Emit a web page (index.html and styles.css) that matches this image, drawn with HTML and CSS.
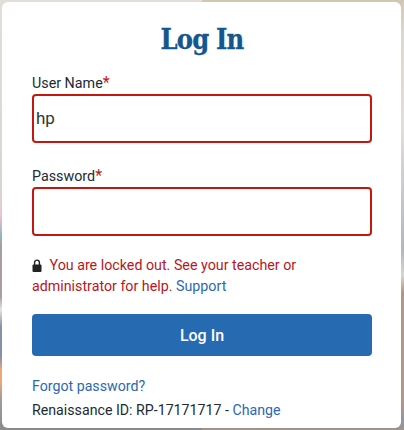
FILE: index.html
```html
<!DOCTYPE html>
<html lang="en">
<head>
<meta charset="utf-8">
<title>Log In</title>
<link rel="stylesheet" href="styles.css">
</head>
<body>
<main class="card">
  <h1 class="title">Log In</h1>
  <form class="form">
    <div class="field">
      <label class="label">User Name<span class="req">*</span></label>
      <div class="input">hp</div>
    </div>
    <div class="field">
      <label class="label">Password<span class="req">*</span></label>
      <div class="input"></div>
    </div>
    <p class="error">
      <svg class="lock" viewBox="0 0 10 13" width="10" height="13" aria-hidden="true"><path d="M2.6 6V3.5a2.4 2.4 0 0 1 4.8 0V6" fill="none" stroke="#222" stroke-width="1.4"/><rect x="0.5" y="5.5" width="9" height="7.5" rx="1" fill="#222"/></svg>
      <span class="msg">You are locked out. See your teacher or administrator for help.</span> <a class="link">Support</a>
    </p>
    <button type="button" class="btn">Log In</button>
    <a class="link forgot">Forgot password?</a>
    <p class="rid">Renaissance ID: RP-17171717 - <a class="link">Change</a></p>
  </form>
</main>
</body>
</html>
```
FILE: styles.css
```css
* { box-sizing: border-box; }
html, body { height: 100%; }
body {
  margin: 0;
  padding: 2px 3px 2px 2px;
  overflow: hidden;
  background:
    linear-gradient(180deg, #e2dfda 0, #d8d4cf 46%, #ecc6cc 50%, #8fb6bc 55%, #a89ea2 57%, #a89ea2 69%, #e6e2de 72%, #8790a6 76%, #8790a6 83%, #e8a878 86%, #e8a878 89%, #a49a9c 93%, #8a8a8c 100%) left / 50% 100% no-repeat,
    linear-gradient(180deg, #d2c6b0 0, #dcd8d0 8%, #e0dedc 30%, #b4b6bc 58%, #d8d4d2 64%, #b09888 68%, #b09888 94%, #8e96a2 98%, #a09488 100%) right / 50% 100% no-repeat;
  font-family: Roboto, "Liberation Sans", sans-serif;
  color: #222a35;
}
.card {
  height: 426px;
  background: #fff;
  border-radius: 6px;
  padding: 22px 29px 0 30px;
}
.title {
  margin: 0;
  text-align: center;
  font-family: "DejaVu Serif", serif;
  font-stretch: condensed;
  font-weight: 700;
  font-size: 27px;
  letter-spacing: -0.8px;
  -webkit-text-stroke: 0.3px #14568f;
  line-height: 32px;
  color: #14568f;
}
.form { display: flex; flex-direction: column; margin-top: 17px; }
.field { display: flex; flex-direction: column; margin-bottom: 23px; }
.label { font-size: 14.3px; line-height: 20px; margin-bottom: 1px; }
.req { color: #c5170e; font-size: 16px; }
.input {
  height: 49px;
  border: 2px solid #c5170e;
  border-radius: 4px;
  padding: 0 2px;
  font-size: 17px;
  line-height: 45px;
  color: #333;
}
.error {
  margin: -4px 0 0;
  font-size: 14.25px;
  line-height: 21px;
}
.lock { vertical-align: -2px; margin-right: 4px; }
.msg { color: #b8161c; }
.link { color: #2a69b0; text-decoration: none; }
.btn {
  margin-top: 17px;
  height: 42px;
  border: 0;
  border-radius: 4px;
  background: #266ab2;
  color: #fff;
  font: 500 16px Roboto, sans-serif;
}
.forgot { margin-top: 20px; font-size: 14.2px; line-height: 20px; }
.rid { margin: 4px 0 0; font-size: 14.2px; line-height: 20px; }
```
